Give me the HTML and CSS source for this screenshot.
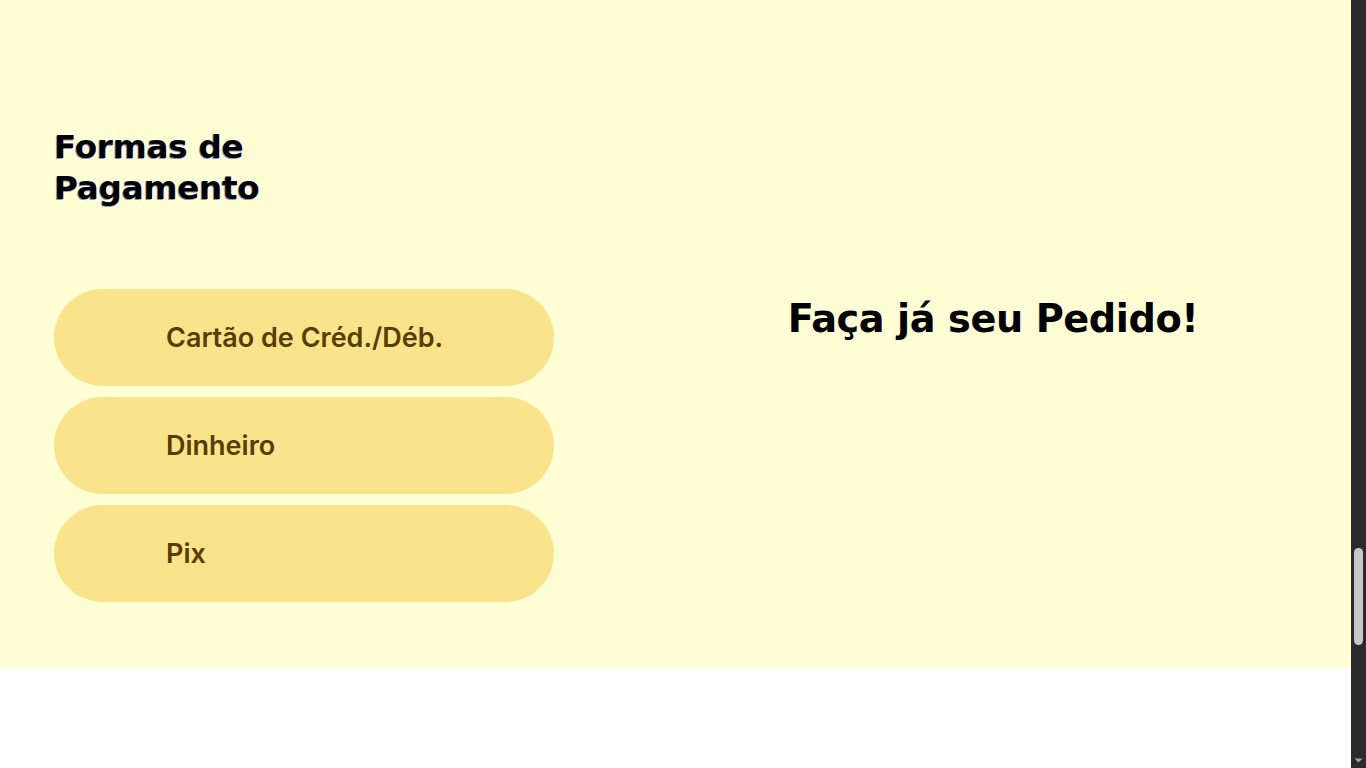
FILE: index.html
```html
<!DOCTYPE html>
<html lang="pt-BR">
<head>
<meta charset="utf-8">
<title>Formas de Pagamento</title>
<link rel="stylesheet" href="styles.css">
</head>
<body>
<section class="pagamento">
  <div class="col-left">
    <h2 class="titulo">Formas de Pagamento</h2>
    <ul class="opcoes">
      <li class="opcao">Cartão de Créd./Déb.</li>
      <li class="opcao">Dinheiro</li>
      <li class="opcao">Pix</li>
    </ul>
  </div>
  <div class="col-right">
    <h2 class="chamada">Faça já seu Pedido!</h2>
  </div>
</section>
<footer class="rodape"></footer>
<div class="scrollbar" aria-hidden="true">
  <div class="scroll-thumb"></div>
  <svg class="scroll-arrow" width="15" height="15" viewBox="0 0 15 15"><path d="M3.5 5.5h8l-4 4z" fill="#a3a3a3"/></svg>
</div>
</body>
</html>
```
FILE: styles.css
```css
html {
  background: #ffffff;
}
body {
  margin: 0;
  background: #ffffff;
  font-family: "DejaVu Sans", sans-serif;
  padding-right: 15px;
}
.pagamento {
  background: #ffffd6;
  height: 668px;
  box-sizing: border-box;
  padding: 127px 0 0 54px;
  display: flex;
}
.col-left {
  width: 500px;
  flex: none;
}
.titulo {
  margin: 0;
  width: 270px;
  font-family: "DejaVu Sans", sans-serif;
  font-weight: 700;
  font-size: 32.7px;
  line-height: 41px;
  letter-spacing: -0.3px;
  color: #000;
  text-shadow: -1px 1px 0 rgba(20, 60, 190, 0.55), 1px 0 0 #ffffff;
}
.opcoes {
  list-style: none;
  margin: 80px 0 0;
  padding: 0;
  display: flex;
  flex-direction: column;
  gap: 11px;
}
.opcao {
  height: 97px;
  border-radius: 49px;
  background: #f9e38b;
  display: flex;
  align-items: center;
  padding-left: 112px;
  font-family: Inter, sans-serif;
  font-weight: 600;
  font-size: 27px;
  color: #5a3c00;
}
.col-right {
  flex: 1;
  display: flex;
  justify-content: center;
  padding-top: 167px;
  padding-left: 81px;
}
.chamada {
  margin: 0;
  font-family: "DejaVu Sans", sans-serif;
  font-weight: 700;
  font-size: 38.3px;
  line-height: 50px;
  letter-spacing: -0.45px;
  color: #000;
  height: 50px;
}
.rodape {
  height: 100px;
  background: #ffffff;
}
.scrollbar {
  position: fixed;
  top: 0;
  right: 0;
  width: 15px;
  height: 100vh;
  background: #2b2b2b;
}
.scroll-thumb {
  position: absolute;
  left: 3px;
  top: 548px;
  width: 9px;
  height: 97px;
  border-radius: 5px;
  background: #c8c8c8;
}
.scroll-arrow {
  position: absolute;
  left: 0;
  bottom: 0;
}
```
